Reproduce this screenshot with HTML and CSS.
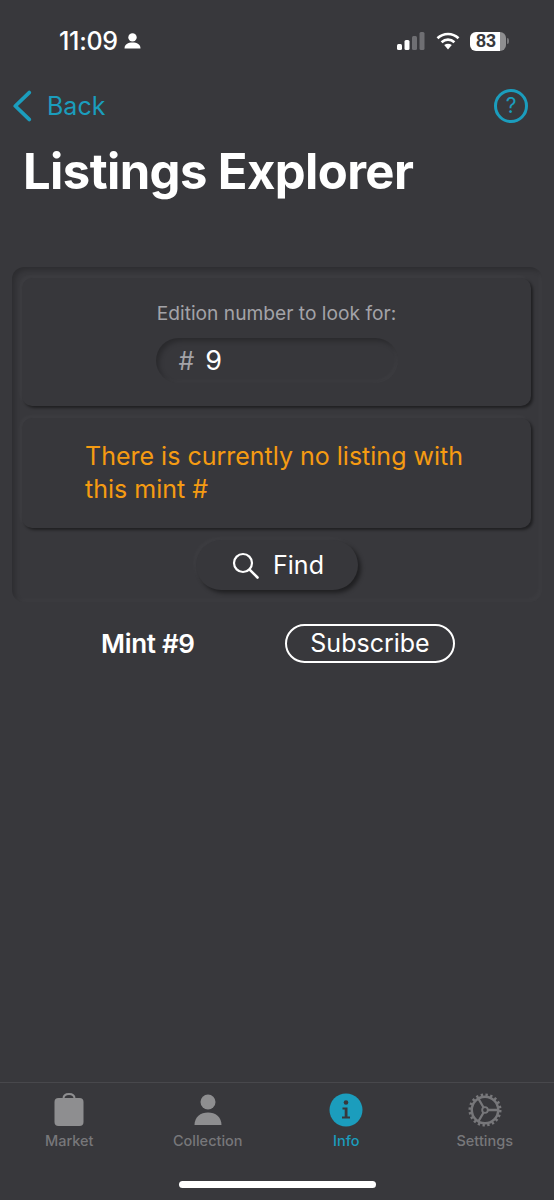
FILE: index.html
```html
<!DOCTYPE html>
<html lang="en">
<head>
    <meta charset="UTF-8">
    <meta name="viewport" content="width=device-width, initial-scale=1.0">
    <title>Listings Explorer</title>
    <link rel="stylesheet" href="styles.css">
</head>
<body>
    <div class="screen">
        <div class="status_bar">
            <div class="status_left">
                <span class="clock">11:09</span>
                <svg class="person_small" viewBox="0 0 17 16"><circle cx="8.5" cy="4.4" r="4.2" fill="#fff"/><path d="M0.5 15.5C0.5 11.5 4 9.6 8.5 9.6S16.5 11.5 16.5 15.5Z" fill="#fff"/></svg>
            </div>
            <div class="status_right">
                <svg class="signal" viewBox="0 0 28 18"><rect x="0" y="12" width="5" height="6" rx="1.5" fill="#fff"/><rect x="7.5" y="8" width="5" height="10" rx="1.5" fill="#fff"/><rect x="15" y="4" width="5" height="14" rx="1.5" fill="#6f6f73"/><rect x="22.5" y="0" width="5" height="18" rx="1.5" fill="#6f6f73"/></svg>
                <svg class="wifi" viewBox="0 0 24 18"><path d="M1.5 6.2C7.5 .6 16.5 .6 22.5 6.2" fill="none" stroke="#fff" stroke-width="2.7"/><path d="M5.6 10.2C9.4 6.8 14.6 6.8 18.4 10.2" fill="none" stroke="#fff" stroke-width="2.7"/><path d="M8.2 13L12 17.4 15.8 13C13.5 11.2 10.5 11.2 8.2 13Z" fill="#fff"/></svg>
                <div class="battery"><span class="battery_num">83</span></div>
                <div class="battery_tip"></div>
            </div>
        </div>

        <div class="nav_row">
            <a class="back_link">
                <svg class="chevron" viewBox="0 0 19 31"><path d="M16.5 2.5L3 15.5 16.5 28.5" fill="none" stroke="#1b9dbd" stroke-width="3.6" stroke-linecap="round" stroke-linejoin="round"/></svg>
                <span>Back</span>
            </a>
            <div class="help_btn">?</div>
        </div>

        <h1 class="page_title">Listings Explorer</h1>

        <div class="panel">
            <div class="card card_search">
                <div class="edition_label">Edition number to look for:</div>
                <div class="mint_input">
                    <span class="hash">#</span>
                    <span class="mint_value">9</span>
                </div>
            </div>
            <div class="card card_message">
                <p class="message">There is currently no listing with this mint #</p>
            </div>
            <button class="find_btn">
                <svg class="search_icon" viewBox="0 0 27 27"><circle cx="11" cy="11" r="9" fill="none" stroke="#fff" stroke-width="2.2"/><path d="M17.6 17.6L25.5 25.5" stroke="#fff" stroke-width="2.6" stroke-linecap="round"/></svg>
                <span>Find</span>
            </button>
        </div>

        <div class="subscribe_row">
            <span class="mint_name">Mint #9</span>
            <button class="subscribe_btn">Subscribe</button>
        </div>

        <div class="tab_bar">
            <div class="tab">
                <svg class="tab_icon" viewBox="0 0 30 34"><path d="M9.5 6V5.5C9.5 2.5 12 1 15 1S20.5 2.5 20.5 5.5V6" fill="none" stroke="#8e8e90" stroke-width="2"/><rect x="0.5" y="5" width="29" height="28" rx="4" fill="#8e8e90"/></svg>
                <span>Market</span>
            </div>
            <div class="tab">
                <svg class="tab_icon" viewBox="0 0 30 34"><circle cx="15" cy="9" r="7.5" fill="#8e8e90"/><path d="M1.5 32C1.5 24 7.5 19.5 15 19.5S28.5 24 28.5 32Z" fill="#8e8e90"/></svg>
                <span>Collection</span>
            </div>
            <div class="tab tab_active">
                <svg class="tab_icon" viewBox="0 0 34 34"><circle cx="17" cy="17" r="16.5" fill="#1b9dbd"/><circle cx="17" cy="9.5" r="2.3" fill="#38383c"/><path d="M13.5 14.5H18.5V23.5H21V25.5H13V23.5H15.7V16.5H13.5Z" fill="#38383c"/></svg>
                <span>Info</span>
            </div>
            <div class="tab">
                <svg class="tab_icon" viewBox="0 0 36 36"><circle cx="18" cy="18" r="14" fill="none" stroke="#77777a" stroke-width="2.6"/><circle cx="18" cy="18" r="15.5" fill="none" stroke="#77777a" stroke-width="4" stroke-dasharray="2.4 2.47"/><circle cx="18" cy="18" r="3" fill="none" stroke="#77777a" stroke-width="2"/><path d="M21 18H32M16.5 15.4L11 5.9M16.5 20.6L11 30.1" stroke="#77777a" stroke-width="2.4"/></svg>
                <span>Settings</span>
            </div>
        </div>
        <div class="home_bar"></div>
    </div>
</body>
</html>
```

FILE: styles.css
```css
body {
    margin: 0;
    background: #38383c;
    font-family: Inter, 'Noto Sans', sans-serif;
    color: white;
}

.screen {
    width: 554px;
    height: 1200px;
    display: flex;
    flex-direction: column;
    overflow: hidden;
}

/* status bar */
.status_bar {
    height: 83px;
    display: flex;
    justify-content: space-between;
    align-items: flex-start;
    box-sizing: border-box;
    padding: 26px 45px 0 59px;
}

.status_left {
    display: flex;
    align-items: center;
    gap: 6px;
}

.clock {
    font-size: 25px;
    line-height: 30px;
    font-weight: 500;
    letter-spacing: -0.3px;
}

.person_small {
    width: 17px;
    height: 16px;
}

.status_right {
    display: flex;
    align-items: center;
    height: 30px;
}

.signal {
    width: 28px;
    height: 18px;
    margin-right: 11px;
}

.wifi {
    width: 24px;
    height: 18px;
    margin-right: 10px;
}

.battery {
    width: 36px;
    height: 19px;
    border-radius: 6px;
    background: linear-gradient(90deg, #fff 83%, #8e8e90 83%);
    display: flex;
    align-items: center;
    justify-content: center;
}

.battery_num {
    color: #38383c;
    font-family: 'Liberation Sans', sans-serif;
    font-size: 18px;
    font-weight: 700;
    padding-right: 4px;
}

.battery_tip {
    width: 2px;
    height: 6px;
    margin-left: 1px;
    border-radius: 0 2px 2px 0;
    background: #77777a;
}

/* header */
.nav_row {
    height: 46px;
    display: flex;
    justify-content: space-between;
    align-items: center;
    padding: 0 26px 0 12px;
}

.back_link {
    display: flex;
    align-items: center;
    gap: 15px;
    color: #1b9dbd;
    font-size: 25px;
}

.chevron {
    width: 20px;
    height: 32px;
}

.help_btn {
    width: 34px;
    height: 34px;
    box-sizing: border-box;
    border: 3px solid #1b9dbd;
    border-radius: 50%;
    color: #1b9dbd;
    font-size: 21px;
    line-height: 28px;
    text-align: center;
}

.page_title {
    margin: 13px 0 0 23px;
    font-size: 49px;
    line-height: 59px;
    font-weight: 700;
    letter-spacing: -0.6px;
}

/* neumorphic panel */
.panel {
    margin: 66px 12px 0;
    height: 335px;
    box-sizing: border-box;
    padding: 11px 11px 0 10px;
    border-radius: 12px;
    display: flex;
    flex-direction: column;
    align-items: center;
    box-shadow: inset 3px 3px 5px rgba(0,0,0,0.2), inset -3px -3px 5px rgba(255,255,255,0.025);
}

.card {
    width: 100%;
    box-sizing: border-box;
    border-radius: 10px;
    background: #37373b;
    box-shadow: 2px 2px 3px rgba(0,0,0,0.45), -2px -2px 4px rgba(255,255,255,0.03);
}

.card_search {
    height: 128px;
    padding-top: 24px;
    display: flex;
    flex-direction: column;
    align-items: center;
}

.edition_label {
    color: #a3a3a8;
    font-size: 19.2px;
    line-height: 23px;
}

.mint_input {
    margin-top: 13px;
    width: 242px;
    height: 45px;
    box-sizing: border-box;
    padding-left: 23px;
    border-radius: 23px;
    display: flex;
    align-items: center;
    gap: 11px;
    box-shadow: inset 3px 3px 5px rgba(0,0,0,0.25), inset -2px -2px 4px rgba(255,255,255,0.03);
}

.hash {
    color: #a3a3a8;
    font-size: 25px;
}

.mint_value {
    font-size: 27px;
}

.card_message {
    height: 110px;
    margin-top: 12px;
    padding: 22px 40px 0 63px;
}

.message {
    margin: 0;
    color: #f59b12;
    font-size: 25px;
    line-height: 33px;
}

.find_btn {
    margin-top: 12px;
    width: 162px;
    height: 50px;
    border: none;
    border-radius: 25px;
    background: #37373b;
    color: white;
    font-family: inherit;
    font-size: 25px;
    padding: 0 0 0 3px;
    display: flex;
    align-items: center;
    justify-content: center;
    gap: 14px;
    box-shadow: 3px 3px 4px rgba(0,0,0,0.45), -2px -2px 4px rgba(255,255,255,0.03);
}

.search_icon {
    width: 27px;
    height: 27px;
}

/* mint row */
.subscribe_row {
    margin-top: 22px;
    height: 38px;
    display: flex;
    align-items: center;
    padding-left: 101px;
}

.mint_name {
    width: 184px;
    font-size: 26px;
    font-weight: 600;
    letter-spacing: -0.3px;
}

.subscribe_btn {
    width: 170px;
    height: 39px;
    box-sizing: border-box;
    background: none;
    border: 2px solid white;
    border-radius: 20px;
    color: white;
    font-family: inherit;
    font-size: 25px;
    padding: 0;
}

/* bottom tabs */
.tab_bar {
    margin-top: auto;
    height: 99px;
    box-sizing: border-box;
    padding: 10px 0 0;
    border-top: 1px solid #48484c;
    display: flex;
}

.tab {
    width: 138.5px;
    display: flex;
    flex-direction: column;
    align-items: center;
    color: #77777a;
    font-size: 14.5px;
    line-height: 18px;
    font-weight: 500;
}

.tab_active {
    color: #1b9dbd;
}

.tab_icon {
    height: 34px;
    margin-bottom: 5px;
}

.home_bar {
    align-self: center;
    width: 197px;
    height: 7px;
    margin-bottom: 12px;
    border-radius: 4px;
    background: white;
}
```
